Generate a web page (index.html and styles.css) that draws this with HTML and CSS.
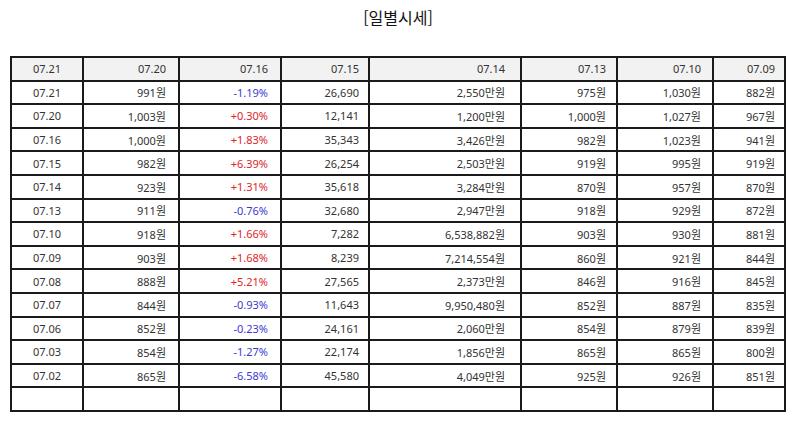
FILE: index.html
```html
<!DOCTYPE html>
<html lang="ko">
<head>
<meta charset="utf-8">
<link rel="stylesheet" href="styles.css">
</head>
<body>
<div class="page">
  <h1 class="title">[일별시세]</h1>
  <table class="grid">
    <colgroup>
      <col class="c1"><col class="c2"><col class="c3"><col class="c4"><col class="c5"><col class="c6"><col class="c7"><col class="c8">
    </colgroup>
    <thead>
      <tr><th class="ctr">07.21</th><th>07.20</th><th>07.16</th><th>07.15</th><th>07.14</th><th>07.13</th><th>07.10</th><th>07.09</th></tr>
    </thead>
    <tbody>
      <tr><td class="ctr">07.21</td><td>991원</td><td class="dn">-1.19%</td><td>26,690</td><td>2,550만원</td><td>975원</td><td>1,030원</td><td>882원</td></tr>
      <tr><td class="ctr">07.20</td><td>1,003원</td><td class="up">+0.30%</td><td>12,141</td><td>1,200만원</td><td>1,000원</td><td>1,027원</td><td>967원</td></tr>
      <tr><td class="ctr">07.16</td><td>1,000원</td><td class="up">+1.83%</td><td>35,343</td><td>3,426만원</td><td>982원</td><td>1,023원</td><td>941원</td></tr>
      <tr><td class="ctr">07.15</td><td>982원</td><td class="up">+6.39%</td><td>26,254</td><td>2,503만원</td><td>919원</td><td>995원</td><td>919원</td></tr>
      <tr><td class="ctr">07.14</td><td>923원</td><td class="up">+1.31%</td><td>35,618</td><td>3,284만원</td><td>870원</td><td>957원</td><td>870원</td></tr>
      <tr><td class="ctr">07.13</td><td>911원</td><td class="dn">-0.76%</td><td>32,680</td><td>2,947만원</td><td>918원</td><td>929원</td><td>872원</td></tr>
      <tr><td class="ctr">07.10</td><td>918원</td><td class="up">+1.66%</td><td>7,282</td><td>6,538,882원</td><td>903원</td><td>930원</td><td>881원</td></tr>
      <tr><td class="ctr">07.09</td><td>903원</td><td class="up">+1.68%</td><td>8,239</td><td>7,214,554원</td><td>860원</td><td>921원</td><td>844원</td></tr>
      <tr><td class="ctr">07.08</td><td>888원</td><td class="up">+5.21%</td><td>27,565</td><td>2,373만원</td><td>846원</td><td>916원</td><td>845원</td></tr>
      <tr><td class="ctr">07.07</td><td>844원</td><td class="dn">-0.93%</td><td>11,643</td><td>9,950,480원</td><td>852원</td><td>887원</td><td>835원</td></tr>
      <tr><td class="ctr">07.06</td><td>852원</td><td class="dn">-0.23%</td><td>24,161</td><td>2,060만원</td><td>854원</td><td>879원</td><td>839원</td></tr>
      <tr><td class="ctr">07.03</td><td>854원</td><td class="dn">-1.27%</td><td>22,174</td><td>1,856만원</td><td>865원</td><td>865원</td><td>800원</td></tr>
      <tr><td class="ctr">07.02</td><td>865원</td><td class="dn">-6.58%</td><td>45,580</td><td>4,049만원</td><td>925원</td><td>926원</td><td>851원</td></tr>
      <tr><td></td><td></td><td></td><td></td><td></td><td></td><td></td><td></td></tr>
    </tbody>
  </table>
</div>
</body>
</html>
```

FILE: styles.css
```css
html, body {
  margin: 0;
  padding: 0;
  background: #fff;
}
.page {
  padding: 6px 9px 0 10px;
  font-family: "Noto Sans", "Noto Sans CJK KR", sans-serif;
  color: #222;
}
.title {
  margin: 0 0 28px 0;
  text-align: center;
  font-size: 16px;
  font-weight: normal;
  line-height: 22px;
  color: #111;
  font-family: "Noto Sans CJK KR", sans-serif;
}
.grid {
  border-collapse: collapse;
  table-layout: fixed;
  width: 774px;
  font-size: 11px;
}
.c1 { width: 72px; }
.c2 { width: 96px; }
.c3 { width: 102px; }
.c4 { width: 88px; }
.c5 { width: 152px; }
.c6 { width: 96px; }
.c7 { width: 96px; }
.c8 { width: 72px; }
.grid th, .grid td {
  border: 2px solid #1a1a1a;
  height: 21px;
  padding: 0 10px 0 4px;
  text-align: right;
  font-weight: normal;
  white-space: nowrap;
  color: #333;
}
.grid tr { height: 23.6px; }
.grid th {
  background: #f2f2f2;
}
.grid th:nth-child(2), .grid td:nth-child(2) { padding-right: 12px; }
.grid th:nth-child(3), .grid td:nth-child(3) { padding-right: 12px; }
.grid th:nth-child(4), .grid td:nth-child(4) { padding-right: 9px; }
.grid th:nth-child(5), .grid td:nth-child(5) { padding-right: 15px; }
.grid th:nth-child(6), .grid td:nth-child(6) { padding-right: 10px; }
.grid th:nth-child(7), .grid td:nth-child(7) { padding-right: 11px; }
.grid th:nth-child(8), .grid td:nth-child(8) { padding-right: 9px; }
.grid .ctr {
  text-align: center;
  padding: 0;
}
.grid .up { color: #e0252b; }
.grid .dn { color: #3b3bd1; }
```
